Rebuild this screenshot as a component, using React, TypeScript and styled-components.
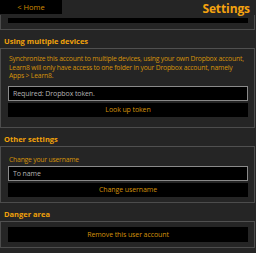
import React from 'react'
import styled, { createGlobalStyle } from 'styled-components'

const Global = createGlobalStyle`
  html, body {
    margin: 0;
    padding: 0;
    background: #252525;
  }
  body {
    font-family: 'Open Sans', 'Liberation Sans', sans-serif;
    overflow: hidden;
  }
`

const Page = styled.div`
  width: 256px;
  height: 253px;
  display: flex;
  flex-flow: column nowrap;
  background: #252525;
  overflow: hidden;
`

const TopBar = styled.div`
  display: flex;
  align-items: flex-start;
  justify-content: space-between;
  height: 15px;
  flex: none;
`

const HomeButton = styled.div`
  width: 62px;
  height: 14px;
  background: #000;
  color: #d08c00;
  font-size: 7.5px;
  line-height: 14px;
  text-align: center;
`

const Title = styled.div`
  color: #f5a30f;
  font-weight: bold;
  font-size: 12px;
  line-height: 14px;
  letter-spacing: -0.1px;
  padding: 2px 6px 0 0;
`

const Box = styled.div`
  border: 1px solid #4c4c4c;
  margin-right: 1px;
  padding: 0 6px 0 7px;
  flex: none;
`

const Stub = styled(Box)`
  border-top: none;
  height: 11px;
  padding-top: 3px;
`

const StubBar = styled.div`
  height: 5px;
  background: #000;
`

const Head = styled.div`
  color: #f2a20a;
  font-weight: bold;
  font-size: 7.5px;
  line-height: 10px;
  height: 10px;
  padding: 6px 0 2px 4px;
  flex: none;
`

const Body = styled(Box)<{ $top: number; $bottom: number }>`
  border-top-color: #505050;
  padding-top: ${p => p.$top}px;
  padding-bottom: ${p => p.$bottom}px;
  display: flex;
  flex-flow: column nowrap;
`

const Text = styled.p<{ $gap: number }>`
  margin: 0 0 ${p => p.$gap}px;
  padding-left: 1px;
  color: #d4920a;
  font-size: 6.8px;
  letter-spacing: -0.2px;
  line-height: 8.5px;
  white-space: nowrap;
`

const Field = styled.input`
  box-sizing: border-box;
  display: block;
  width: 100%;
  height: 15px;
  margin: 0 0 2px;
  padding: 0 4px;
  background: #000;
  border: 1px solid #8a8a8a;
  color: #ccc;
  font-family: inherit;
  font-size: 7px;
  letter-spacing: -0.1px;
  outline: none;
  flex: none;

  &::placeholder {
    color: #b4b4b4;
  }
`

const Button = styled.div<{ $h?: number }>`
  height: ${p => p.$h ?? 14}px;
  background: #000;
  color: #d4920a;
  font-size: 7px;
  letter-spacing: -0.1px;
  line-height: ${p => p.$h ?? 14}px;
  text-align: center;
  flex: none;
`

const Section = styled.section`
  display: flex;
  flex-flow: column nowrap;
  flex: none;
`

export default function App() {
  return (
    <Page>
      <Global />
      <TopBar>
        <HomeButton>&lt; Home</HomeButton>
        <Title>Settings</Title>
      </TopBar>
      <Stub>
        <StubBar />
      </Stub>

      <Section>
        <Head>Using multiple devices</Head>
        <Body $top={6} $bottom={10}>
          <Text $gap={5}>
            Synchronize this account to multiple devices, using your own Dropbox account,
            <br />
            Learn8 will only have access to one folder in your Dropbox account, namely
            <br />
            Apps &gt; Learn8.
          </Text>
          <Field placeholder="Required: Dropbox token." />
          <Button>Look up token</Button>
        </Body>
      </Section>

      <Section>
        <Head>Other settings</Head>
        <Body $top={9} $bottom={5}>
          <Text $gap={2}>Change your username</Text>
          <Field placeholder="To name" />
          <Button>Change username</Button>
        </Body>
      </Section>

      <Section>
        <Head>Danger area</Head>
        <Body $top={5} $bottom={5}>
          <Button $h={15}>Remove this user account</Button>
        </Body>
      </Section>
    </Page>
  )
}
